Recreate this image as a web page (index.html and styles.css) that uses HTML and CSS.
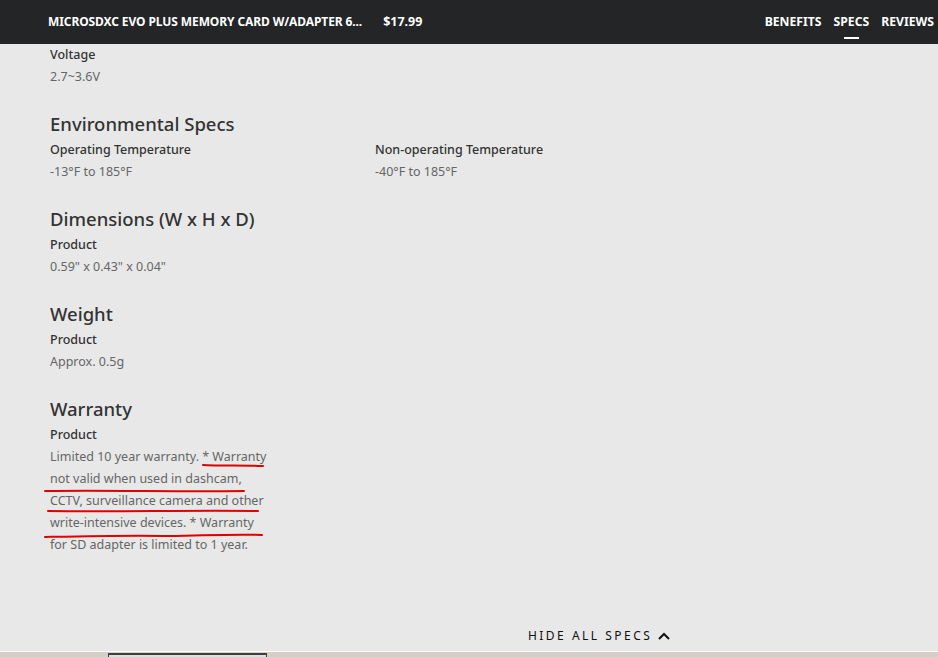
FILE: index.html
```html
<!DOCTYPE html>
<html lang="en">
  <head>
    <meta charset="UTF-8" />
    <meta name="viewport" content="width=device-width, initial-scale=1.0" />
    <title>Specs</title>
    <link rel="stylesheet" href="styles.css">
  </head>

  <body>
    <header class="header">
      <section class="header-content">
        <article class="product">
          <span class="product-name">MICROSDXC EVO PLUS MEMORY CARD W/ADAPTER 6...</span>
          <span class="product-price">$17.99</span>
        </article>
        <nav class="menu">
          <a href="#benefits">BENEFITS</a>
          <a href="#specs" class="active">SPECS</a>
          <a href="#reviews">REVIEWS</a>
        </nav>
      </section>
    </header>

    <main class="specs">
      <section class="spec-group">
        <div class="spec-item">
          <h4>Voltage</h4>
          <p>2.7~3.6V</p>
        </div>
      </section>

      <section class="spec-group">
        <h3>Environmental Specs</h3>
        <div class="spec-grid">
          <div class="spec-item">
            <h4>Operating Temperature</h4>
            <p>-13°F to 185°F</p>
          </div>
          <div class="spec-item">
            <h4>Non-operating Temperature</h4>
            <p>-40°F to 185°F</p>
          </div>
        </div>
      </section>

      <section class="spec-group">
        <h3>Dimensions (W x H x D)</h3>
        <div class="spec-item">
          <h4>Product</h4>
          <p>0.59" x 0.43" x 0.04"</p>
        </div>
      </section>

      <section class="spec-group">
        <h3>Weight</h3>
        <div class="spec-item">
          <h4>Product</h4>
          <p>Approx. 0.5g</p>
        </div>
      </section>

      <section class="spec-group">
        <h3>Warranty</h3>
        <div class="spec-item">
          <h4>Product</h4>
          <p class="warranty">
            Limited 10 year warranty. * Warranty not valid when used in dashcam, CCTV, surveillance camera and other write-intensive devices. * Warranty for SD adapter is limited to 1 year.
            <!-- red marker lines drawn over the text -->
            <svg class="marks" width="230" height="100" viewBox="0 0 230 100">
              <path d="M153 19 C170 20 195 19 213 20" />
              <path d="M-5 45 C60 44 130 46 194 45" />
              <path d="M-2 65 C70 66 140 64 208 65" />
              <path d="M-5 91 C40 90 80 89 120 90 C160 89 190 88 212 89" />
            </svg>
          </p>
        </div>
      </section>

      <div class="toggle">
        <a href="#specs">HIDE ALL SPECS
          <svg width="12" height="8" viewBox="0 0 12 8"><path d="M1 7 L6 2 L11 7" /></svg>
        </a>
      </div>
    </main>

    <footer class="scrollbar">
      <div class="thumb"></div>
    </footer>
  </body>
</html>
```

FILE: styles.css
```css
html {
  box-sizing: border-box;
  font-family: "Noto Sans", "Open Sans", sans-serif;
  font-size: 16px;
}

*,
*:before,
*:after {
  box-sizing: inherit;
}

body {
  margin: 0;
  height: 100vh;
  overflow: hidden;
  display: flex;
  flex-direction: column;
  background-color: #e8e8e8;
  color: #333;
}

.header {
  height: 44px;
  background-color: #232527;
  color: #fff;
  flex-shrink: 0;
}

.header-content {
  height: 100%;
  display: flex;
  justify-content: space-between;
  align-items: center;
  padding: 0 4px 2px 48px;
}

.product {
  display: flex;
  align-items: center;
  font-size: 12px;
  font-weight: 700;
}

.product-name {
  white-space: nowrap;
  letter-spacing: -0.1px;
}

.product-price {
  margin-left: 21px;
  font-size: 12.5px;
}

.menu {
  display: flex;
  gap: 12px;
  font-size: 12.2px;
  font-weight: 700;
}

.menu a {
  color: #fff;
  text-decoration: none;
  position: relative;
}

.menu a.active:after {
  content: "";
  position: absolute;
  left: 50%;
  bottom: -9px;
  width: 15px;
  height: 2px;
  margin-left: -7px;
  background-color: #fff;
}

.specs {
  flex-grow: 1;
  padding-left: 50px;
}

.spec-group {
  margin-bottom: 24px;
}

.spec-group h3 {
  margin: 0 0 3px;
  font-size: 18.5px;
  font-weight: 500;
  line-height: 24px;
  color: #333;
}

.spec-grid {
  display: grid;
  grid-template-columns: 325px 325px;
}

.spec-item h4 {
  margin: 0;
  font-size: 12.5px;
  font-weight: 500;
  line-height: 22px;
  color: #333;
}

.spec-item p {
  margin: 0;
  font-size: 12.5px;
  line-height: 22px;
  color: #666;
}

.spec-item .warranty {
  position: relative;
  width: 220px;
}

.marks {
  position: absolute;
  left: 0;
  top: 0;
  overflow: visible;
}

.marks path {
  fill: none;
  stroke: #e10000;
  stroke-width: 2;
  stroke-linecap: round;
}

.toggle {
  margin-top: 67px;
  text-align: center;
  padding-left: 210px;
}

.toggle a {
  color: #111;
  text-decoration: none;
  font-size: 12px;
  letter-spacing: 2.5px;
  line-height: 22px;
}

.toggle svg path {
  fill: none;
  stroke: #111;
  stroke-width: 2;
}

.scrollbar {
  height: 6px;
  flex-shrink: 0;
  border-top: 1px solid #fff;
  background-color: #d4d0c8;
  padding: 1px 0 0 108px;
}

.thumb {
  width: 159px;
  height: 5px;
  border-top: 2px solid #404040;
  border-left: 1px solid #404040;
  border-right: 1px solid #404040;
  background-color: #e0e0e0;
}
```
